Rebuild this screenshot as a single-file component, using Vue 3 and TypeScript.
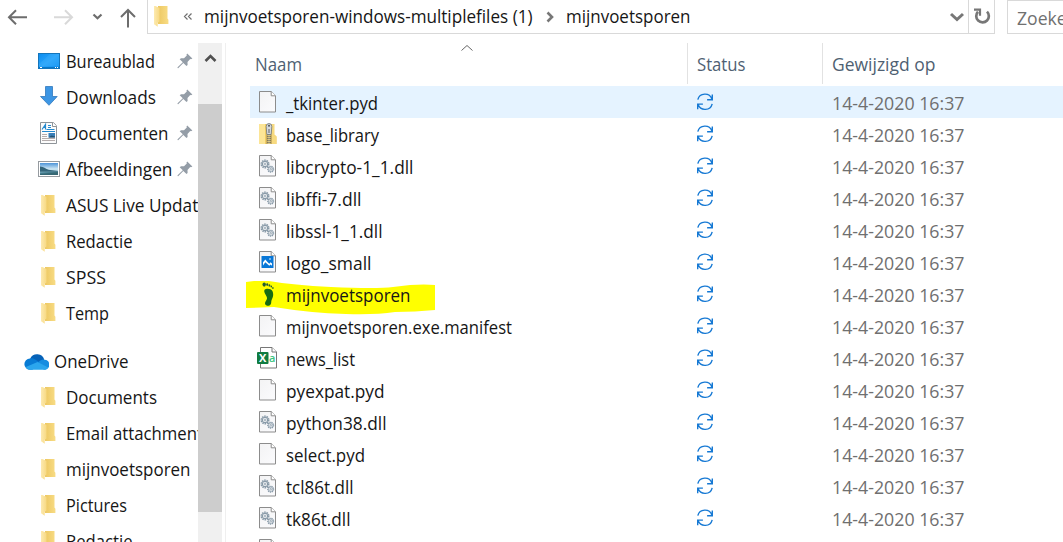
<script setup lang="ts">
import { h } from 'vue'

interface NavItem { label: string; width: number; icon: string; pinned?: boolean; root?: boolean }
interface FileItem { name: string; width: number; icon: string; state?: 'hover' | 'marked' }

// Real text condensed to the advance width of the system UI face.
const Label = (props: { text: string; width: number }) =>
  h('svg', { width: props.width + 2, height: 26, role: 'text' }, [
    h('text', { x: 0, y: 19, textLength: props.width, lengthAdjust: 'spacingAndGlyphs' }, props.text),
  ])
Label.props = ['text', 'width']

const quick: NavItem[] = [
  { label: 'Bureaublad', width: 89, icon: 'desktop', pinned: true },
  { label: 'Downloads', width: 90, icon: 'download', pinned: true },
  { label: 'Documenten', width: 102.5, icon: 'document', pinned: true },
  { label: 'Afbeeldingen', width: 106.5, icon: 'pictures', pinned: true },
  { label: 'ASUS Live Update', width: 142, icon: 'folder' },
  { label: 'Redactie', width: 66.5, icon: 'folder' },
  { label: 'SPSS', width: 40, icon: 'folder' },
  { label: 'Temp', width: 43, icon: 'folder' },
]
const cloud: NavItem[] = [
  { label: 'OneDrive', width: 74.5, icon: 'cloud', root: true },
  { label: 'Documents', width: 91, icon: 'folder' },
  { label: 'Email attachments', width: 145, icon: 'folder' },
  { label: 'mijnvoetsporen', width: 124.5, icon: 'folder' },
  { label: 'Pictures', width: 61, icon: 'folder' },
  { label: 'Redactie', width: 66.5, icon: 'folder' },
]
const groups = [quick, cloud]
const files: FileItem[] = [
  { name: '_tkinter.pyd', width: 92, icon: 'file', state: 'hover' },
  { name: 'base_library', width: 93, icon: 'zip' },
  { name: 'libcrypto-1_1.dll', width: 127.5, icon: 'dll' },
  { name: 'libffi-7.dll', width: 75.5, icon: 'dll' },
  { name: 'libssl-1_1.dll', width: 96.5, icon: 'dll' },
  { name: 'logo_small', width: 85.5, icon: 'image' },
  { name: 'mijnvoetsporen', width: 124.5, icon: 'foot', state: 'marked' },
  { name: 'mijnvoetsporen.exe.manifest', width: 226, icon: 'file' },
  { name: 'news_list', width: 69, icon: 'csv' },
  { name: 'pyexpat.pyd', width: 98.5, icon: 'file' },
  { name: 'python38.dll', width: 100.5, icon: 'dll' },
  { name: 'select.pyd', width: 79, icon: 'file' },
  { name: 'tcl86t.dll', width: 67.5, icon: 'dll' },
  { name: 'tk86t.dll', width: 64.5, icon: 'dll' },
  { name: '', width: 0, icon: 'file' },
]
</script>

<template>
  <div class="window">
    <svg class="defs" width="0" height="0">
      <defs>
        <linearGradient id="gFront" x1="0" x2="1"><stop offset="0" stop-color="#fdeab0" /><stop offset="1" stop-color="#f7d983" /></linearGradient>
        <linearGradient id="gBack" x1="0" x2="1"><stop offset="0" stop-color="#edc862" /><stop offset="1" stop-color="#f8dc85" /></linearGradient>
        <linearGradient id="gDesk" x1="0" y1="0" x2="1" y2="1"><stop offset="0" stop-color="#0a8cf0" /><stop offset=".5" stop-color="#2aa4fa" /><stop offset="1" stop-color="#0c8ff0" /></linearGradient>
        <linearGradient id="gSky" x1="0" y1="0" x2="0" y2="1"><stop offset="0" stop-color="#4d94d8" /><stop offset=".5" stop-color="#cfe8f4" /><stop offset="1" stop-color="#5b9bb5" /></linearGradient>
        <linearGradient id="gPage" x1="0" y1="0" x2="1" y2="1"><stop offset="0" stop-color="#f3f3f4" /><stop offset="1" stop-color="#fbfbfd" /></linearGradient>
      </defs>
      <symbol id="folder" viewBox="0 0 24 24">
        <path d="M9 2h9.500v12.500l.9 1.200V20H9z" fill="url(#gBack)" />
        <path d="M5 2h1.500l4 1.900V17.500l-1.800 1.200v4L5 20.300z" fill="url(#gFront)" />
      </symbol>
      <symbol id="desktop" viewBox="0 0 24 24">
        <rect x="2.500" y="4.500" width="21" height="15" fill="url(#gDesk)" stroke="#1475bb" />
        <path d="M3 15L14 5h9v12H3z" fill="#54b9ff" opacity=".22" />
        <path d="M3 18.500h20" stroke="#0877c9" /><path d="M4 18.500h2m13 0h1m1 0h1" stroke="#fff" />
      </symbol>
      <symbol id="download" viewBox="0 0 24 24">
        <path d="M9.500 1.500h7v10h4.700L13 20.300 4.500 11.500h5z" fill="#3d96e4" stroke="#3179bd" stroke-width=".8" />
      </symbol>
      <symbol id="document" viewBox="0 0 24 24">
        <path d="M4.500 1.500h12.800l3.200 3.200v17.800h-16z" fill="#fcfcfc" stroke="#8e9499" />
        <path d="M16.500 1.500v4h4" fill="#fff" stroke="#8e9499" />
        <path d="M6 8.500l3.500-5V8.500M7.500 6.500h2M12 4.500h3M12 6.500h3M10.500 8.500h8M6 10.500h13" fill="none" stroke="#248ad0" stroke-width="1.200" />
        <path d="M6 13.500h5M6 15.500h5M6 17.500h13M6 19.500h13" stroke="#b5adad" />
        <rect x="12.500" y="12" width="6.500" height="4.500" fill="#397fb9" /><path d="M12.500 16.500l3-2 3.500 1v1z" fill="#24516f" />
      </symbol>
      <symbol id="pictures" viewBox="0 0 24 24">
        <rect x="2.500" y="4.500" width="21" height="15" fill="#fff" stroke="#969ba0" />
        <rect x="4" y="6" width="18" height="12" fill="url(#gSky)" />
        <path d="M4 9.500c4 0 6 3 10 3.500l8 1v.8H4z" fill="#34657a" /><path d="M4 15.500l18-1V18H4z" fill="#477f91" /><path d="M4 17l12-1.200L22 15v3H4z" fill="#2c5861" opacity=".6" />
      </symbol>
      <symbol id="cloud" viewBox="0 0 24 24">
        <path d="M6 9a7.300 7.300 0 0 1 13.500 1.200L12 15z" fill="#0662b8" />
        <path d="M6 20a5.500 5.500 0 0 1-.3-11c2-.3 3.600.200 5 1.100L17 14l-9 6z" fill="#087bd4" />
        <path d="M14 12.800c1.400-2 3.200-2.900 5.500-2.600a4.900 4.900 0 0 1 0 9.800L11 16z" fill="#168de0" />
        <path d="M1.800 17.300L13 12.400l10.300 5.300c-.8 1.500-2.200 2.300-3.800 2.300H6c-1.900 0-3.300-1-4.200-2.700z" fill="#2ba6ed" />
      </symbol>
      <symbol id="pin" viewBox="0 0 16 16">
        <path d="M10.200.5l5.200 5-1.400.8-.8-.2-2.700 3 .1 2.900-1.100 1-3.200-3.100L1.200 15.200.500 15.100l.1-.8 5.200-5.100-3.100-3L4 5.200l3 .1 2.800-2.800-.3-.9z" fill="#949da7" />
      </symbol>
      <symbol id="file" viewBox="0 0 24 24">
        <path d="M3.500 1.500h11.700l4.300 4.300v16.200h-16z" fill="url(#gPage)" stroke="#8c8c8c" />
        <path d="M15.200 1.500v4.300h4.300" fill="#fff" stroke="#8c8c8c" />
      </symbol>
      <symbol id="dll" viewBox="0 0 24 24">
        <use href="#file" />
        <g fill="none" stroke="#8799a7">
          <circle cx="9" cy="10" r="3.600" stroke-width="1.800" stroke-dasharray="1.500 .75" /><circle cx="9" cy="10" r="2.700" stroke-width="1" /><circle cx="9" cy="10" r="1" stroke-width=".8" />
          <circle cx="14.700" cy="15.200" r="2.900" stroke-width="1.300" stroke-dasharray="1.300 .7" /><circle cx="14.700" cy="15.200" r="2.200" stroke-width=".7" /><circle cx="14.700" cy="15.200" r=".8" stroke-width=".8" />
        </g>
      </symbol>
      <symbol id="zip" viewBox="0 0 24 24">
        <path d="M3 2h14.500v10l3 2.300V22H3z" fill="#f1cc62" /><path d="M3 2h6v20H3z" fill="#fce596" /><path d="M16 2h2.500v11l2 2v7H16z" fill="#f7da80" />
        <path d="M10 13h6v9h-6z" fill="#c8ae65" /><path d="M13 12v10" stroke="#444" stroke-width="3" stroke-dasharray="1 1" /><path d="M13 12v10" stroke="#e7dca9" stroke-width="1" />
        <path d="M10.200 4.500q0-3 2.800-3t2.800 3l-.6 8h-4.400z" fill="#d4d8dc" stroke="#70777c" stroke-width=".8" /><circle cx="13" cy="3.800" r="1" fill="#4e555a" /><path d="M13 7v4" stroke="#777" stroke-width="1.200" />
      </symbol>
      <symbol id="image" viewBox="0 0 24 24">
        <use href="#file" /><rect x="5.500" y="6" width="12" height="12" rx=".5" fill="#0877d7" />
        <path d="M7 15.500v-3.300l2.300-2.700 2.400 2.700 1.600 1.600 1.300-1.600 1.400 1.300v2.300l-1.400-1.200-1.300 1.200-4-3.500z" fill="#fff" /><circle cx="14" cy="9" r=".8" fill="#fff" />
      </symbol>
      <symbol id="foot" viewBox="0 0 24 24">
        <path d="M8.800 7.600c1.500-1.600 6.300-1.100 7.600 1.400 1.500 3.200.6 6.500-.7 8.800-.9 1.700.1 3.200-1.300 4.900-1.200 1.600-4.800 1.200-5.300-.8-.5-2 1.600-3.500 1.900-5.400.5-2.700-4.400-6.300-2.200-8.900z" fill="#176b13" />
        <g fill="#235c35"><ellipse cx="8.200" cy="2.600" rx="1.700" ry="2.100" /><ellipse cx="11.200" cy="2.600" rx="1" ry="1.400" /><ellipse cx="13.400" cy="3.400" rx=".9" ry="1.200" /><ellipse cx="15.300" cy="4.500" rx=".8" ry="1.100" /><ellipse cx="16.900" cy="6" rx=".7" ry="1" /></g>
      </symbol>
      <symbol id="sync" viewBox="0 0 18 18">
        <g fill="none" stroke="#1679d4" stroke-width="1.400"><path d="M1.800 6.600A7.400 7.400 0 0 1 15.900 6M16.300 1.500v5.200h-5.200M16.200 10.800A7.400 7.400 0 0 1 2.100 11.600M1.700 16.300v-5.200h5.200" /></g>
      </symbol>
    </svg>

    <header class="toolbar">
      <nav class="controls">
        <svg width="147" height="34" fill="none" stroke="#6d6d6d" stroke-width="2">
          <path d="M27 17.300H9.500M16 10.300l-7 7 7 7" /><path d="M54 17.300h17.500M65 10.300l7 7-7 7" stroke="#d9d9d9" />
          <path d="M93.500 14.500l4 3.800 4-3.800" stroke-width="2.200" /><path d="M128 27.500V10M121 17l7-7 7 7" />
        </svg>
      </nav>
      <div class="address">
        <svg class="addr-icon" width="24" height="24"><use href="#folder" /></svg>
        <svg class="more" width="10" height="10" fill="none" stroke="#707070" stroke-width="1.200"><path d="M4.500 1.500L1.500 4.500l3 3M8.500 1.500l-3 3 3 3" /></svg>
        <Label class="label" text="mijnvoetsporen-windows-multiplefiles (1)" :width="328.5" />
        <svg class="crumb" width="9" height="12" fill="none" stroke="#777" stroke-width="2.600"><path d="M1.500 1.500L6 6l-4.500 4.500" /></svg>
        <Label class="label" text="mijnvoetsporen" :width="124.5" />
        <svg class="drop" width="16" height="12" fill="none" stroke="#777" stroke-width="3"><path d="M2 3l6 5.500L14 3" /></svg>
      </div>
      <div class="refresh">
        <svg width="24" height="24" fill="none" stroke="#777" stroke-width="2.700"><path d="M7 6.700A6.300 6.300 0 1 0 16 6.600" /><path d="M3 4.700h6v6" stroke-width="2.200" /></svg>
      </div>
      <div class="search"><Label class="label" text="Zoeken" :width="60.5" /></div>
    </header>

    <main class="body">
      <aside class="sidebar">
        <section v-for="(group, g) in groups" :key="g" class="group">
          <div v-for="(item, i) in group" :key="i" class="nav-row" :class="{ root: item.root }">
            <svg class="nav-icon" :class="{ 'root-icon': item.root, small: item.icon === 'folder' }" viewBox="0 0 24 24"><use :href="'#' + item.icon" /></svg>
            <Label class="label" :text="item.label" :width="item.width" />
            <svg v-if="item.pinned" class="pin" width="16" height="16"><use href="#pin" /></svg>
          </div>
        </section>
      </aside>
      <div class="scrollbar">
        <svg width="24" height="61" fill="none" stroke="#505050" stroke-width="2.600"><path d="M7.500 18l5-5 5 5" /></svg>
        <div class="thumb"></div>
      </div>
      <div class="divider"></div>
      <section class="list">
        <div class="head">
          <div class="col-name"><Label class="label" text="Naam" :width="47" /><svg class="sort" width="14" height="8" fill="none" stroke="#666"><path d="M1.500 6.500l5.500-5 5.500 5" /></svg></div>
          <div class="col-status"><Label class="label" text="Status" :width="48.5" /></div>
          <div class="col-date"><Label class="label" text="Gewijzigd op" :width="103.5" /></div>
        </div>
        <div v-for="(file, i) in files" :key="i" class="row" :class="file.state">
          <svg v-if="file.state === 'marked'" class="marker" width="190" height="38">
            <path d="M0 2l8-1 15 0q24 4 62 6 46 2 62 0l17-2q15-1 25 0v25q-20 2-40 2-20 3-49 2-36-1-72-7L0 28z" fill="#ffff00" />
          </svg>
          <svg v-if="file.icon === 'csv'" class="file-icon" width="24" height="24">
            <path d="M4.500 1.500h11.500l4.500 4.500v16h-16z" fill="#fff" stroke="#777" /><path d="M16 1.500V6h4.500" fill="#fff" stroke="#777" />
            <rect x="1" y="6" width="11.500" height="12" rx="1" fill="#107c41" />
            <text x="3" y="16" font-size="11" font-weight="700" fill="#fff">X</text>
            <text x="13" y="16" font-size="11" font-weight="600" fill="#3cc481">a</text>
          </svg>
          <svg v-else class="file-icon" width="24" height="24"><use :href="'#' + file.icon" /></svg>
          <template v-if="file.name">
            <Label class="label name" :text="file.name" :width="file.width" />
            <svg class="sync" width="18" height="18"><use href="#sync" /></svg>
            <Label class="label date" text="14-4-2020 16:37" :width="132.5" />
          </template>
        </div>
      </section>
    </main>
  </div>
</template>

<style>
html, body { margin: 0; overflow: hidden; background: #fff; }
</style>

<style scoped>
.window { width: 1063px; height: 542px; overflow: hidden; display: flex; flex-direction: column; background: #fff; font-family: "Open Sans", "Noto Sans", sans-serif; font-size: 17.7px; color: #161616; }
.window svg { display: block; flex: none; }
.window .defs { position: absolute; }
.window .label { fill: currentColor; overflow: visible; }
.toolbar { display: flex; height: 43px; flex: none; align-items: flex-start; }
.controls { width: 147px; height: 34px; flex: none; }
.address { box-sizing: border-box; width: 822px; height: 34px; border: 1px solid #d9d9d9; border-top: 0; display: flex; align-items: flex-start; flex: none; }
.addr-icon { margin: 4px 0 0 1px; }
.more { margin: 12px 12px 0 10px; }
.address .label { margin-top: 4px; }
.address .more + .label { margin-left: -1px; }
.crumb { margin: 11px 11px 0 11px; }
.address .crumb + .label { margin-left: 0; }
.drop { margin: 11px 3px 0 auto; }
.refresh { width: 25px; height: 33px; border-right: 1px solid #d9d9d9; border-bottom: 1px solid #d9d9d9; flex: none; }
.refresh svg { margin: 5px 0 0 2px; }
.search { box-sizing: border-box; height: 34px; width: 70px; flex: none; margin-left: 12px; border: 1px solid #d9d9d9; padding: 5px 0 0 9px; color: #707070; }
.body { display: flex; flex: 1; min-height: 0; }
.sidebar { width: 198px; overflow: hidden; flex: none; }
.group { margin-bottom: 12px; }
.nav-row { height: 36px; box-sizing: border-box; padding: 6px 0 0 36px; display: flex; position: relative; }
.nav-row.root { padding-left: 24px; }
.nav-icon { width: 24px; height: 24px; margin: 0 5.500px 0 0; }
.nav-icon.root-icon { width: 25px; height: 25px; margin-right: 5px; }
.pin { position: absolute; left: 177px; top: 10px; }
.scrollbar { width: 24px; background: #f0f0f0; flex: none; }
.thumb { height: 408px; background: #cdcdcd; }
.divider { width: 1px; margin-left: 3px; background: #efefef; flex: none; }
.list { flex: 1; min-width: 0; padding-left: 24px; }
.head { display: flex; height: 43px; color: #4f5f72; }
.head > div { height: 41px; box-sizing: border-box; padding-top: 9px; position: relative; }
.col-name { width: 437px; padding-left: 4.500px; }
.col-status { width: 135px; border-left: 1px solid #e2e2e2; padding-left: 9px; }
.col-date { border-left: 1px solid #e2e2e2; padding-left: 8.500px; }
.sort { position: absolute; left: 210px; top: 1px; }
.row { height: 32px; display: flex; position: relative; }
.row.hover { background: #e5f3ff; }
.file-icon { margin: 4px 0 0 6px; position: relative; }
.name { margin: 5px 0 0 5.500px; position: relative; }
.sync { position: absolute; left: 446px; top: 7px; }
.date { position: absolute; left: 582px; top: 5px; color: #6f6f6f; }
.marker { position: absolute; left: -4px; top: 2px; }
</style>
